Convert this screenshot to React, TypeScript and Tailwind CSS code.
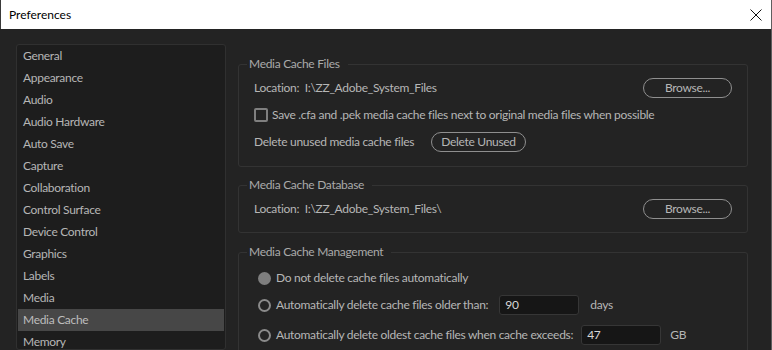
import React from 'react';

const sections = [
  'General',
  'Appearance',
  'Audio',
  'Audio Hardware',
  'Auto Save',
  'Capture',
  'Collaboration',
  'Control Surface',
  'Device Control',
  'Graphics',
  'Labels',
  'Media',
  'Media Cache',
  'Memory',
];

const font = { fontFamily: 'Lato, "Noto Sans", sans-serif' };

const PillButton: React.FC<{ label: string; className?: string }> = ({ label, className }) => (
  <button
    className={
      'h-[20px] rounded-full border border-[#8f8f8f] text-[#b6b6b6] text-[12px] leading-[18px] tracking-[-0.3px] ' +
      (className || '')
    }
  >
    {label}
  </button>
);

const Group: React.FC<{ title: string; className?: string; children: React.ReactNode }> = ({
  title,
  className,
  children,
}) => (
  <fieldset className={'w-[510px] border border-[#333333] rounded-[3px] px-[8px] ' + (className || '')}>
    <legend className="pl-[2px] pr-[8px] text-[12px] leading-[16px] tracking-[-0.3px] text-[#aaaaaa]">
      {title}
    </legend>
    {children}
  </fieldset>
);

const Radio: React.FC<{ filled?: boolean }> = ({ filled }) =>
  filled ? (
    <span className="ml-[4px] w-[13px] h-[13px] rounded-full bg-[#7e7e7e] shrink-0" />
  ) : (
    <span className="ml-[4px] w-[13px] h-[13px] rounded-full border-2 border-[#8a8a8a] shrink-0" />
  );

const NumberBox: React.FC<{ value: string; className?: string }> = ({ value, className }) => (
  <div
    className={
      'w-[80px] h-[20px] bg-[#161616] border border-[#363636] rounded-[3px] pl-[5px] text-[#d6d6d6] leading-[18px] ' +
      (className || '')
    }
  >
    {value}
  </div>
);

export default function App() {
  const selected = 'Media Cache';
  return (
    <div style={font} className="w-[772px] h-[350px] overflow-hidden bg-[#232323] flex flex-col border-r border-[#5e5e5e]">
      <div className="h-[29px] shrink-0 bg-white border-l border-[#3a3a3a] flex items-center justify-between">
        <span className="pl-[8px] text-[12px] text-black">Preferences</span>
        <svg width="12" height="12" viewBox="0 0 12 12" className="mr-[9px]">
          <path d="M0.5 0.5 L11.5 11.5 M11.5 0.5 L0.5 11.5" stroke="#111" strokeWidth="1" fill="none" />
        </svg>
      </div>

      <div className="flex flex-1 pt-[15px] pl-[16px] gap-[12px] min-h-0 text-[12px] tracking-[-0.3px] text-[#b6b6b6]">
        <div className="w-[210px] shrink-0 bg-[#1d1d1d] border border-[#303030] rounded-[3px] px-[1px] overflow-hidden">
          {sections.map((s) => (
            <div
              key={s}
              className={
                'h-[22px] leading-[22px] pl-[5px] ' + (s === selected ? 'bg-[#474747] text-[#bdbdbd]' : '')
              }
            >
              {s}
            </div>
          ))}
        </div>

        <div className="flex flex-col">
          <Group title="Media Cache Files" className="mt-[12px]">
            <div className="px-[7px] pt-[6px] pb-[14px] flex flex-col gap-[7px]">
              <div className="h-[20px] flex items-center justify-between">
                <span>Location:&nbsp;&nbsp;I:\ZZ_Adobe_System_Files</span>
                <PillButton label="Browse..." className="w-[89px]" />
              </div>
              <div className="h-[20px] flex items-center">
                <span className="w-[14px] h-[14px] border-2 border-[#7f7f7f] rounded-[2px] mr-[4px] shrink-0" />
                <span>Save .cfa and .pek media cache files next to original media files when possible</span>
              </div>
              <div className="h-[20px] flex items-center">
                <span className="w-[177px]">Delete unused media cache files</span>
                <PillButton label="Delete Unused" className="w-[95px]" />
              </div>
            </div>
          </Group>

          <Group title="Media Cache Database" className="mt-[10px]">
            <div className="px-[7px] pt-[6px] pb-[13px]">
              <div className="h-[20px] flex items-center justify-between">
                <span>Location:&nbsp;&nbsp;I:\ZZ_Adobe_System_Files\</span>
                <PillButton label="Browse..." className="w-[89px]" />
              </div>
            </div>
          </Group>

          <Group title="Media Cache Management" className="mt-[11px]">
            <div className="px-[7px] pt-[8px] pb-[14px] flex flex-col">
              <div className="h-[20px] flex items-center gap-[5px]">
                <Radio filled />
                <span>Do not delete cache files automatically</span>
              </div>
              <div className="h-[20px] mt-[7px] flex items-center gap-[5px]">
                <Radio />
                <span>Automatically delete cache files older than:</span>
                <NumberBox value="90" className="ml-[6px]" />
                <span className="ml-[6px]">days</span>
              </div>
              <div className="h-[20px] mt-[10px] flex items-center gap-[5px]">
                <Radio />
                <span>Automatically delete oldest cache files when cache exceeds:</span>
                <NumberBox value="47" className="ml-[3px]" />
                <span className="ml-[4px]">GB</span>
              </div>
            </div>
          </Group>
        </div>
      </div>
    </div>
  );
}
